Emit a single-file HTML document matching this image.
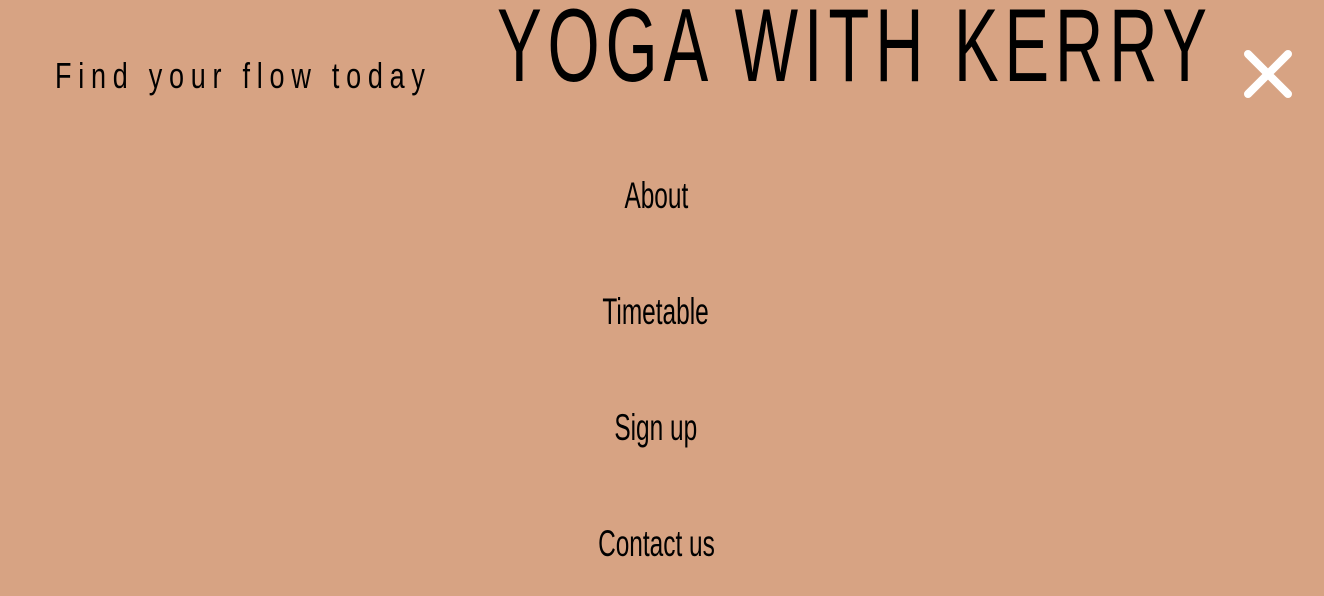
<!DOCTYPE html>
<html><head><meta charset="utf-8"><style>
html,body{margin:0;padding:0;}
body{width:1324px;height:596px;background:#d7a383;position:relative;overflow:hidden;font-family:"Liberation Sans Narrow","Liberation Sans",sans-serif;color:#000;}
.t{position:absolute;white-space:nowrap;line-height:1;transform-origin:0 0;}
#title{left:497px;top:-6px;font-size:104px;letter-spacing:9px;transform:scaleX(0.645);}
#tag{left:55px;top:58px;font-size:36px;letter-spacing:9px;transform:scaleX(0.75);}
.m{position:absolute;left:0;width:1312px;text-align:center;font-size:37px;line-height:1;}
.m span{display:inline-block;transform:scaleX(0.66);}
</style></head><body>
<div class="t" id="title">YOGA WITH KERRY</div>
<div class="t" id="tag">Find your flow today</div>
<svg style="position:absolute;left:1242px;top:48px" width="52" height="52" viewBox="0 0 52 52"><path d="M6 6L46 46M46 6L6 46" stroke="#fff" stroke-width="8" stroke-linecap="round"/></svg>
<div class="m" style="top:177px"><span>About</span></div>
<div class="m" style="top:293px"><span>Timetable</span></div>
<div class="m" style="top:409px"><span>Sign up</span></div>
<div class="m" style="top:525px"><span>Contact us</span></div>
</body></html>
